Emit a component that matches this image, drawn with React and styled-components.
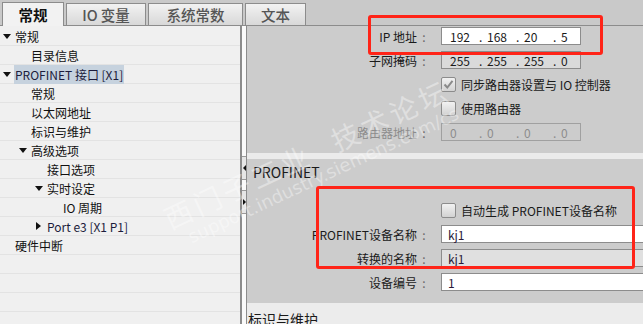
import React from "react";
import styled, { createGlobalStyle } from "styled-components";

const GlobalStyle = createGlobalStyle`
  body {
    margin: 0;
    font-family: "Noto Sans CJK SC", "Noto Sans", sans-serif;
  }
`;

const Screen = styled.div`
  position: relative;
  width: 643px;
  height: 324px;
  overflow: hidden;
  display: flex;
  flex-direction: column;
  background: #f0f0f0;
`;

const TabBar = styled.div`
  box-sizing: border-box;
  height: 26px;
  display: flex;
  align-items: flex-end;
  gap: 2px;
  padding-left: 2px;
  background: #c9c9c9;
  border-bottom: 1px solid #8c8c8c;
`;

const Tab = styled.div`
  box-sizing: border-box;
  width: ${({ $w }) => $w}px;
  height: ${({ $active }) => ($active ? 24 : 22)}px;
  margin-bottom: ${({ $active }) => ($active ? -1 : 0)}px;
  border: 1px solid #8c8c8c;
  border-bottom: none;
  background: ${({ $active }) =>
    $active ? "#f2f2f2" : "linear-gradient(#f2f2f2, #d8d8d8)"};
  display: flex;
  align-items: center;
  justify-content: center;
  font-size: 14.5px;
  font-weight: ${({ $active }) => ($active ? 700 : 500)};
  color: ${({ $active }) => ($active ? "#111" : "#555")};
`;

const Body = styled.div`
  flex: 1;
  display: flex;
  min-height: 0;
`;

const Tree = styled.div`
  width: 240px;
  flex: none;
  padding-top: 1px;
  background: #f0f0f0;
`;

const TreeRow = styled.div`
  box-sizing: border-box;
  height: 19px;
  border-bottom: 1px solid #e3e3e3;
  display: flex;
  align-items: center;
  padding-left: ${({ $level }) => $level * 16}px;
  font-size: 12px;
  color: #111;
`;

const ArrowSlot = styled.span`
  width: 14px;
  flex: none;
  display: flex;
  align-items: center;
  padding-left: 3px;
  box-sizing: border-box;
`;

const Down = styled.span`
  width: 0;
  height: 0;
  border-left: 4px solid transparent;
  border-right: 4px solid transparent;
  border-top: 5px solid #111;
`;

const Right = styled.span`
  width: 0;
  height: 0;
  margin-left: 1px;
  border-top: 4px solid transparent;
  border-bottom: 4px solid transparent;
  border-left: 5px solid #111;
`;

const NodeText = styled.span`
  height: 19px;
  line-height: 19px;
  padding: 0 1px;
  background: ${({ $selected }) => ($selected ? "#c6d2de" : "transparent")};
  color: ${({ $latin }) => ($latin ? "#1c1c3c" : "#111")};
  white-space: nowrap;
`;

const Splitter = styled.div`
  box-sizing: border-box;
  width: 7px;
  flex: none;
  border-left: 2px solid #8c8c8c;
  border-right: 1px solid #8c8c8c;
  background: #fafafa;
  display: flex;
  flex-direction: column;
  padding-top: 130px;
  gap: 10px;
`;

const SplitButton = styled.div`
  height: 22px;
  border-top: 1px solid #9a9a9a;
  border-bottom: 1px solid #9a9a9a;
  background: #e6e6e6;
  display: flex;
  align-items: center;
  justify-content: center;
`;

const TinyLeft = styled.span`
  width: 0;
  height: 0;
  border-top: 3px solid transparent;
  border-bottom: 3px solid transparent;
  border-right: 3px solid #111;
`;

const TinyRight = styled.span`
  width: 0;
  height: 0;
  border-top: 3px solid transparent;
  border-bottom: 3px solid transparent;
  border-left: 3px solid #111;
`;

const Panel = styled.div`
  flex: 1;
  min-width: 0;
  display: flex;
  flex-direction: column;
  background: #ececec;
  overflow: hidden;
`;

const Section = styled.div`
  box-sizing: border-box;
  height: ${({ $h }) => $h}px;
  padding-top: ${({ $pt }) => $pt}px;
  background: #cccccc;
  flex: none;
`;

const Band = styled.div`
  height: 6px;
  flex: none;
  background: #ebebeb;
`;

const Heading = styled.div`
  height: 18px;
  line-height: 18px;
  padding-left: 6px;
  margin-bottom: 20px;
  font-size: 14px;
  color: #1a1a1a;
`;

const NextHeading = styled.div`
  padding: 7px 0 0 1px;
  font-size: 14px;
  line-height: 18px;
  color: #1a1a1a;
`;

const FormRow = styled.div`
  height: 18px;
  margin-bottom: 6px;
  display: flex;
  align-items: center;
`;

const Label = styled.div`
  width: 184px;
  flex: none;
  display: flex;
  justify-content: flex-end;
  font-size: 12px;
  color: ${({ $dim }) => ($dim ? "#8c8c8c" : "#1a1a1a")};
  white-space: nowrap;
`;

const Colon = styled.span`
  width: 14px;
  text-align: center;
  color: #666;
`;

const Field = styled.div`
  margin-left: 10px;
  flex: 1;
  display: flex;
  align-items: center;
  min-width: 0;
`;

const AddrBox = styled.div`
  box-sizing: border-box;
  width: 140px;
  height: 18px;
  padding-left: 8px;
  display: flex;
  align-items: center;
  border: 1px solid ${({ $variant }) => ($variant === "off" ? "#a0a0a0" : "#8c8c8c")};
  background: ${({ $variant }) =>
    $variant === "edit" ? "#ffffff" : $variant === "ro" ? "#dadada" : "#cccccc"};
  color: ${({ $variant }) => ($variant === "off" ? "#8c8c8c" : "#1a1a1a")};
  font-size: 12px;
`;

const Octet = styled.span`
  width: 29px;
  flex: none;
`;

const Dot = styled.span`
  width: 8px;
  flex: none;
`;

const TextBox = styled.div`
  box-sizing: border-box;
  flex: 1;
  height: 18px;
  margin-right: -4px;
  padding-left: 6px;
  display: flex;
  align-items: center;
  border: 1px solid #8c8c8c;
  background: ${({ $ro }) => ($ro ? "#e0e0e0" : "#ffffff")};
  font-size: 12px;
  color: #2a1a3a;
`;

const CheckBox = styled.span`
  box-sizing: border-box;
  width: 15px;
  height: 15px;
  flex: none;
  border: 1px solid #8c8c8c;
  border-radius: 2px;
  background: linear-gradient(#f2f2f2, #d2d2d2);
  display: flex;
  align-items: center;
  justify-content: center;
`;

const CheckText = styled.span`
  margin-left: 5px;
  font-size: 12px;
  color: #1a1a1a;
  white-space: nowrap;
`;

const RedFrame = styled.div`
  position: absolute;
  left: ${({ $x }) => $x}px;
  top: ${({ $y }) => $y}px;
  width: ${({ $w }) => $w}px;
  height: ${({ $h }) => $h}px;
  box-sizing: border-box;
  border: 3px solid #ff2418;
  border-radius: 3px;
  pointer-events: none;
`;

const Watermark = styled.div`
  position: absolute;
  left: 158px;
  top: 204px;
  transform-origin: 0 0;
  transform: rotate(-25deg);
  color: rgba(255, 255, 255, 0.38);
  pointer-events: none;
  white-space: nowrap;
`;

const MarkBig = styled.div`
  font-size: 28px;
  line-height: 34px;
  letter-spacing: 4px;
  word-spacing: 14px;
`;

const MarkSmall = styled.div`
  font-family: "DejaVu Sans", sans-serif;
  font-size: 18px;
  line-height: 20px;
  padding-left: 14px;
`;

const tabs = [
  { label: "常规", w: 62, active: true },
  { label: "IO 变量", w: 80 },
  { label: "系统常数", w: 95 },
  { label: "文本", w: 61 },
];

const nodes = [
  { text: "常规", level: 0, arrow: "down" },
  { text: "目录信息", level: 1 },
  { text: "PROFINET 接口 [X1]", level: 0, arrow: "down", selected: true, latin: true },
  { text: "常规", level: 1 },
  { text: "以太网地址", level: 1 },
  { text: "标识与维护", level: 1 },
  { text: "高级选项", level: 1, arrow: "down" },
  { text: "接口选项", level: 2 },
  { text: "实时设定", level: 2, arrow: "down" },
  { text: "IO 周期", level: 3 },
  { text: "Port e3 [X1 P1]", level: 2, arrow: "right", latin: true },
  { text: "硬件中断", level: 0 },
  { text: "", level: 0 },
  { text: "", level: 0 },
  { text: "", level: 0 },
];

const Address = ({ parts, variant }) => (
  <AddrBox $variant={variant}>
    {parts.map((p, i) => (
      <React.Fragment key={i}>
        <Octet>{p}</Octet>
        {i < 3 && <Dot>.</Dot>}
      </React.Fragment>
    ))}
  </AddrBox>
);

const Check = ({ checked }) => (
  <CheckBox>
    {checked && (
      <svg width="11" height="11" viewBox="0 0 11 11">
        <path d="M1.5 5.5 L4.3 8.5 L9.5 1.8" fill="none" stroke="#8a8a8a" strokeWidth="2" />
      </svg>
    )}
  </CheckBox>
);

const Row = ({ label, dim, children }) => (
  <FormRow>
    <Label $dim={dim}>
      {label}
      {label && <Colon>:</Colon>}
    </Label>
    <Field>{children}</Field>
  </FormRow>
);

const App = () => {
  return (
    <>
      <GlobalStyle />
      <Screen>
        <TabBar>
          {tabs.map((t) => (
            <Tab key={t.label} $w={t.w} $active={t.active}>
              {t.label}
            </Tab>
          ))}
        </TabBar>
        <Body>
          <Tree>
            {nodes.map((n, i) => (
              <TreeRow key={i} $level={n.level}>
                {n.text && (
                  <ArrowSlot>
                    {n.arrow === "down" && <Down />}
                    {n.arrow === "right" && <Right />}
                  </ArrowSlot>
                )}
                {n.text && (
                  <NodeText $selected={n.selected} $latin={n.latin}>
                    {n.text}
                  </NodeText>
                )}
              </TreeRow>
            ))}
          </Tree>
          <Splitter>
            <SplitButton>
              <TinyLeft />
            </SplitButton>
            <SplitButton>
              <TinyRight />
            </SplitButton>
          </Splitter>
          <Panel>
            <Section $h={127} $pt={1}>
              <Row label="IP 地址">
                <Address parts={["192", "168", "20", "5"]} variant="edit" />
              </Row>
              <Row label="子网掩码">
                <Address parts={["255", "255", "255", "0"]} variant="ro" />
              </Row>
              <Row>
                <Check checked />
                <CheckText>同步路由器设置与 IO 控制器</CheckText>
              </Row>
              <Row>
                <Check />
                <CheckText>使用路由器</CheckText>
              </Row>
              <Row label="路由器地址" dim>
                <Address parts={["0", "0", "0", "0"]} variant="off" />
              </Row>
            </Section>
            <Band />
            <Section $h={144} $pt={4}>
              <Heading>PROFINET</Heading>
              <Row>
                <Check />
                <CheckText>自动生成 PROFINET设备名称</CheckText>
              </Row>
              <Row label="PROFINET设备名称">
                <TextBox>kj1</TextBox>
              </Row>
              <Row label="转换的名称">
                <TextBox $ro>kj1</TextBox>
              </Row>
              <Row label="设备编号">
                <TextBox>1</TextBox>
              </Row>
            </Section>
            <NextHeading>标识与维护</NextHeading>
          </Panel>
        </Body>
        <Watermark>
          <MarkBig>西门子工业 技术论坛</MarkBig>
          <MarkSmall>support.industry.siemens.com/cs</MarkSmall>
        </Watermark>
        <RedFrame $x={368} $y={15} $w={235} $h={40} />
        <RedFrame $x={316} $y={186} $w={319} $h={83} />
      </Screen>
    </>
  );
};

export default App;
